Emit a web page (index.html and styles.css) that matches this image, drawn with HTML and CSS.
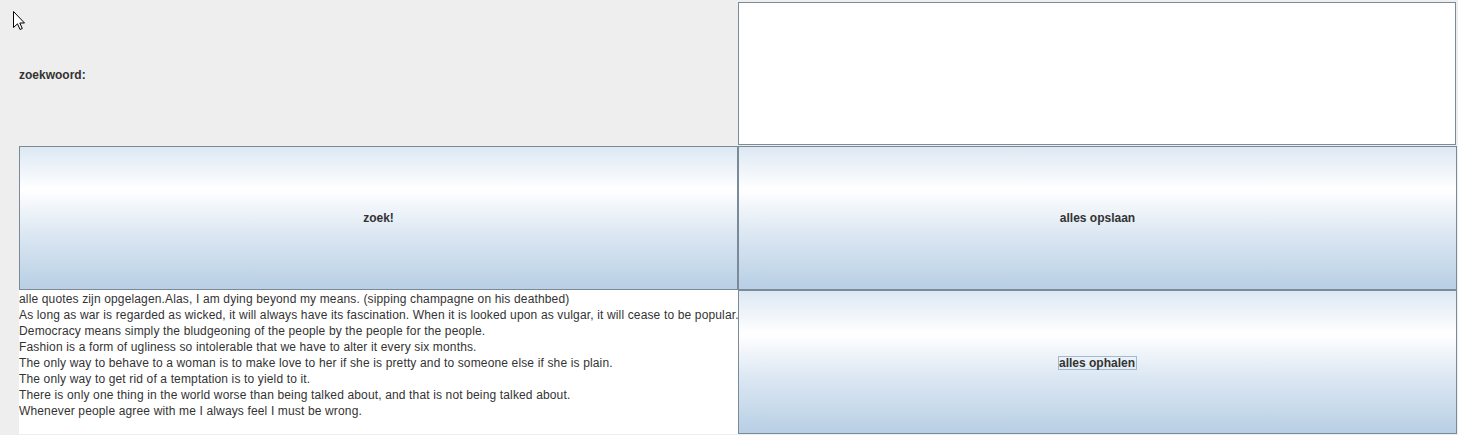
FILE: index.html
```html
<!DOCTYPE html>
<html>
<head>
<meta charset="utf-8">
<link rel="stylesheet" href="styles.css">
</head>
<body>
<div class="grid">
  <div class="cell label-cell"><span class="label">zoekwoord:</span></div>
  <div class="cell"><div class="textfield"></div></div>
  <div class="cell"><div class="button">zoek!</div></div>
  <div class="cell"><div class="button">alles opslaan</div></div>
  <div class="cell"><div class="textarea">alle quotes zijn opgelagen.Alas, I am dying beyond my means. (sipping champagne on his deathbed)
As long as war is regarded as wicked, it will always have its fascination. When it is looked upon as vulgar, it will cease to be popular.
Democracy means simply the bludgeoning of the people by the people for the people.
Fashion is a form of ugliness so intolerable that we have to alter it every six months.
The only way to behave to a woman is to make love to her if she is pretty and to someone else if she is plain.
The only way to get rid of a temptation is to yield to it.
There is only one thing in the world worse than being talked about, and that is not being talked about.
Whenever people agree with me I always feel I must be wrong.</div></div>
  <div class="cell"><div class="button"><span class="focus">alles ophalen</span></div></div>
</div>
<svg class="cursor" width="13" height="20" viewBox="0 0 13 20"><path d="M0.5 0.5 L0.5 16.5 L4.5 12.8 L7 18.5 L9.3 17.5 L6.8 12 L11.5 12 Z" fill="#fff" stroke="#000" stroke-width="1" stroke-linejoin="miter"/></svg>
</body>
</html>
```
FILE: styles.css
```css
html, body {
  margin: 0;
  padding: 0;
  background: #eeeeee;
  width: 1458px;
  height: 435px;
  overflow: hidden;
}
body {
  font-family: "Liberation Sans", Arial, sans-serif;
  font-size: 12px;
  color: #333333;
  position: relative;
}
.grid {
  display: grid;
  grid-template-columns: 719px 719px;
  grid-template-rows: 144px 144px 144px;
  margin: 2px 0 0 19px;
}
.cell {
  display: flex;
  min-width: 0;
  min-height: 0;
}
.label-cell {
  align-items: center;
  padding-top: 2px;
}
.label {
  font-weight: bold;
}
.textfield {
  width: 718px;
  height: 143px;
  box-sizing: border-box;
  border: 1px solid #7a8a99;
  background: #ffffff;
}
.button {
  flex: 1;
  box-sizing: border-box;
  border: 1px solid #7a8a99;
  background: linear-gradient(to bottom, #dde8f3 0%, #ffffff 30%, #dde8f3 60%, #b8cfe5 100%);
  display: flex;
  align-items: center;
  justify-content: center;
  font-weight: bold;
}
.focus {
  border: 1px solid #a3b8cc;
  padding: 0 1px 0 0;
  line-height: 12px;
  margin-top: 2px;
}
.textarea {
  flex: 1;
  background: #ffffff;
  white-space: pre;
  line-height: 16px;
  padding-top: 1px;
  letter-spacing: 0.146px;
  overflow: hidden;
}
.cursor {
  position: absolute;
  left: 13px;
  top: 11px;
}
```
